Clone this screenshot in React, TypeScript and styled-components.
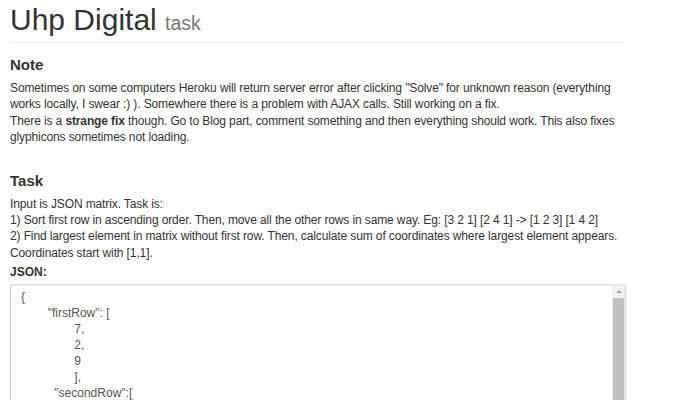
import React from 'react';
import styled, { createGlobalStyle } from 'styled-components';

const GlobalStyle = createGlobalStyle`
    html, body {
        margin: 0;
        padding: 0;
        background: #fff;
    }
    body {
        font-family: "Liberation Sans", Arial, sans-serif;
        font-size: 12px;
        line-height: 16.4px;
        color: #333;
    }
`;

const Page = styled.div`
    width: 616px;
    padding: 0 10px;
`;

const PageHeader = styled.div`
    padding-bottom: 2px;
    border-bottom: 1px solid #eee;
    margin-bottom: 13px;
`;

const Title = styled.h1`
    margin: 0;
    padding-top: 3px;
    font-size: 30px;
    font-weight: 400;
    line-height: 33px;
    color: #333;
`;

const Small = styled.small`
    font-size: 65%;
    color: #777;
`;

const Section = styled.section<{ $gap?: number }>`
    margin-bottom: ${p => p.$gap ?? 0}px;
`;

const SectionTitle = styled.h4`
    margin: 0 0 7px;
    font-size: 15px;
    font-weight: 700;
    line-height: 17px;
`;

const Text = styled.p`
    margin: 0 0 3px;
    letter-spacing: -0.12px;
`;

const Label = styled.label`
    display: block;
    margin: 0 0 3px;
    font-weight: 700;
    font-size: 12px;
`;

const AreaWrap = styled.div`
    position: relative;
    width: 616px;
`;

const JsonArea = styled.textarea`
    display: block;
    box-sizing: border-box;
    width: 100%;
    height: 300px;
    margin: 0;
    padding: 4px 24px 4px 10px;
    border: 1px solid #ccc;
    border-top-color: #ddd;
    border-radius: 3px;
    box-shadow: inset 0 1px 1px rgba(0, 0, 0, 0.075);
    font-family: "Liberation Sans", Arial, sans-serif;
    font-size: 12px;
    line-height: 16px;
    color: #555;
    tab-size: 8;
    resize: none;
    overflow: hidden;
    outline: none;
`;

/* headless browser hides native scrollbars, so draw the classic one over the field */
const ScrollBar = styled.div`
    position: absolute;
    top: 1px;
    right: 1px;
    bottom: 1px;
    width: 13px;
    background: #f1f1f1;
    display: flex;
    flex-direction: column;
    align-items: center;
`;

const ScrollArrow = styled.div`
    height: 13px;
    width: 13px;
    display: flex;
    align-items: center;
    justify-content: center;

    &::before {
        content: '';
        border-left: 3px solid transparent;
        border-right: 3px solid transparent;
        border-bottom: 3px solid #a3a3a3;
    }
`;

const ScrollThumb = styled.div`
    width: 11px;
    height: 190px;
    background: #c1c1c1;
`;

const json = [
    '{',
    '\t"firstRow": [',
    '\t\t7,',
    '\t\t2,',
    '\t\t9',
    '\t\t],',
    '\t  "secondRow":[',
    '\t\t1,',
    '\t\t5,',
    '\t\t3',
    '\t\t],',
    '\t  "thirdRow":[',
    '\t\t4,',
    '\t\t8,',
    '\t\t6',
    '\t\t],',
    '\t  "fourthRow":[',
    '\t\t2,',
    '\t\t9,',
    '\t\t1',
    '\t\t]',
    '}',
].join('\n');

export default function App(): JSX.Element {
    return (
        <>
            <GlobalStyle />
            <Page>
                <PageHeader>
                    <Title>
                        Uhp Digital <Small>task</Small>
                    </Title>
                </PageHeader>

                <Section $gap={26}>
                    <SectionTitle>Note</SectionTitle>
                    <Text>
                        Sometimes on some computers Heroku will return server error after clicking "Solve" for
                        unknown reason (everything works locally, I swear :) ). Somewhere there is a problem with
                        AJAX calls. Still working on a fix.
                        <br />
                        There is a <b>strange fix</b> though. Go to Blog part, comment something and then
                        everything should work. This also fixes glyphicons sometimes not loading.
                    </Text>
                </Section>

                <Section>
                    <SectionTitle>Task</SectionTitle>
                    <Text>
                        Input is JSON matrix. Task is:
                        <br />
                        1) Sort first row in ascending order. Then, move all the other rows in same way. Eg: [3 2 1]
                        [2 4 1] -&gt; [1 2 3] [1 4 2]
                        <br />
                        2) Find largest element in matrix without first row. Then, calculate sum of coordinates
                        where largest element appears. Coordinates start with [1,1].
                    </Text>
                    <Label htmlFor="json">JSON:</Label>
                    <AreaWrap>
                        <JsonArea id="json" defaultValue={json} spellCheck={false} />
                        <ScrollBar>
                            <ScrollArrow />
                            <ScrollThumb />
                        </ScrollBar>
                    </AreaWrap>
                </Section>
            </Page>
        </>
    );
}
